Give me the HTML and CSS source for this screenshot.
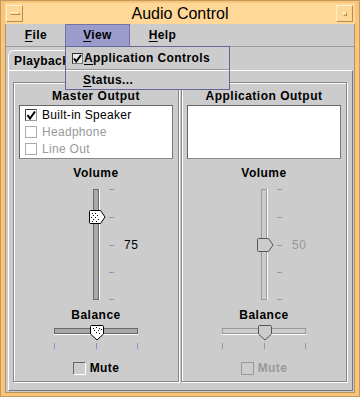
FILE: index.html
```html
<!DOCTYPE html>
<html>
<head>
  <title>Audio Control</title>
  <meta name="viewport" content="width=device-width, initial-scale=1">
  <link rel="stylesheet" href="styles.css">
</head>
<body>
  <div class="window">
    <div class="titlebar">
      <span class="wbtn"><span class="wbtn-min"></span></span>
      <span class="title">Audio Control</span>
      <span class="wbtn"><span class="wbtn-max"></span></span>
    </div>

    <div class="menubar">
      <span class="menu menu-first"><u>F</u>ile</span>
      <span class="menu open"><u>V</u>iew</span>
      <span class="menu"><u>H</u>elp</span>

      <div class="dropdown">
        <div class="ditem">
          <span class="cb cb-menu">
            <svg width="9" height="9" viewBox="0 0 9 9"><path d="M1 4.5 L3.2 7.5 L8 1" fill="none" stroke="#000" stroke-width="2"/></svg>
          </span>
          <span><u>A</u>pplication Controls</span>
        </div>
        <div class="dsep"></div>
        <div class="ditem ditem-plain"><span><u>S</u>tatus...</span></div>
      </div>
    </div>

    <div class="content">
      <div class="tabs"><span class="tab">Playback</span></div>
      <div class="tabpanel">

        <div class="group">
          <div class="gtitle">Master Output</div>
          <div class="list">
            <div class="litem">
              <span class="cb cb-on">
                <svg width="10" height="10" viewBox="0 0 10 10"><path d="M1.5 5 L4 8.5 L9 1.5" fill="none" stroke="#000" stroke-width="2"/></svg>
              </span>
              Built-in Speaker
            </div>
            <div class="litem off"><span class="cb cb-off"></span>Headphone</div>
            <div class="litem off"><span class="cb cb-off"></span>Line Out</div>
          </div>

          <div class="gtitle gap-vol">Volume</div>
          <div class="vslider">
            <span></span>
            <svg width="36" height="113" viewBox="0 0 36 113">
              <rect x="15.5" y="1.5" width="5" height="110" fill="#a9a9a9" stroke="#6b6b6b"/>
              <line x1="21.5" y1="1" x2="21.5" y2="112" stroke="#fff"/>
              <g stroke="#8f8fcc">
                <line x1="31" y1="1.5" x2="36" y2="1.5"/>
                <line x1="31" y1="29.5" x2="36" y2="29.5"/>
                <line x1="31" y1="57.5" x2="36" y2="57.5"/>
                <line x1="31" y1="84.5" x2="36" y2="84.5"/>
                <line x1="31" y1="111.5" x2="36" y2="111.5"/>
              </g>
              <path d="M12.5 22.5 H22.5 L27 29 L22.5 35.5 H12.5 Q11.5 35.5 11.5 34.5 V23.5 Q11.5 22.5 12.5 22.5 Z" fill="#fff" stroke="#000"/>
              <g fill="#000">
                <rect x="14" y="25" width="1" height="1"/><rect x="17" y="25" width="1" height="1"/>
                <rect x="15" y="27" width="1" height="1"/><rect x="19" y="27" width="1" height="1"/>
                <rect x="13" y="29" width="1" height="1"/><rect x="17" y="29" width="1" height="1"/>
                <rect x="15" y="31" width="1" height="1"/><rect x="20" y="31" width="1" height="1"/>
                <rect x="14" y="33" width="1" height="1"/><rect x="18" y="33" width="1" height="1"/>
              </g>
            </svg>
            <span class="vlabel">75</span>
          </div>

          <div class="gtitle gap-bal">Balance</div>
          <svg class="hslider" width="86" height="25" viewBox="0 0 86 25">
            <rect x="1.5" y="4.5" width="83" height="5" fill="#a9a9a9" stroke="#6b6b6b"/>
            <line x1="1" y1="10.5" x2="85" y2="10.5" stroke="#fff"/>
            <g stroke="#8f8fcc">
              <line x1="1.5" y1="19" x2="1.5" y2="25"/>
              <line x1="43.5" y1="19" x2="43.5" y2="25"/>
              <line x1="84.5" y1="19" x2="84.5" y2="25"/>
            </g>
            <path d="M38.5 1.5 H49.5 Q50.5 1.5 50.5 2.5 V10 L44 16 L37.5 10 V2.5 Q37.5 1.5 38.5 1.5 Z" fill="#fff" stroke="#000"/>
            <g fill="#000">
              <rect x="40" y="4" width="1" height="1"/><rect x="43" y="3" width="1" height="1"/><rect x="46" y="4" width="1" height="1"/>
              <rect x="41" y="6" width="1" height="1"/><rect x="45" y="6" width="1" height="1"/><rect x="48" y="5" width="1" height="1"/>
              <rect x="43" y="8" width="1" height="1"/><rect x="46" y="9" width="1" height="1"/>
            </g>
          </svg>

          <div class="mute"><span class="cb cb-mute"></span>Mute</div>
        </div>

        <div class="group">
          <div class="gtitle">Application Output</div>
          <div class="list"></div>

          <div class="gtitle gap-vol">Volume</div>
          <div class="vslider">
            <span></span>
            <svg width="36" height="113" viewBox="0 0 36 113">
              <rect x="15.5" y="1.5" width="5" height="110" fill="#cccccc" stroke="#999"/>
              <line x1="21.5" y1="1" x2="21.5" y2="112" stroke="#fff"/>
              <g stroke="#999">
                <line x1="31" y1="1.5" x2="36" y2="1.5"/>
                <line x1="31" y1="29.5" x2="36" y2="29.5"/>
                <line x1="31" y1="57.5" x2="36" y2="57.5"/>
                <line x1="31" y1="84.5" x2="36" y2="84.5"/>
                <line x1="31" y1="111.5" x2="36" y2="111.5"/>
              </g>
              <path d="M12.5 50.5 H22.5 L27 57 L22.5 63.5 H12.5 Q11.5 63.5 11.5 62.5 V51.5 Q11.5 50.5 12.5 50.5 Z" fill="#cccccc" stroke="#555"/>
            </svg>
            <span class="vlabel off">50</span>
          </div>

          <div class="gtitle gap-bal">Balance</div>
          <svg class="hslider" width="86" height="25" viewBox="0 0 86 25">
            <rect x="1.5" y="4.5" width="83" height="5" fill="#cccccc" stroke="#999"/>
            <line x1="1" y1="10.5" x2="85" y2="10.5" stroke="#fff"/>
            <g stroke="#999">
              <line x1="1.5" y1="19" x2="1.5" y2="25"/>
              <line x1="43.5" y1="19" x2="43.5" y2="25"/>
              <line x1="84.5" y1="19" x2="84.5" y2="25"/>
            </g>
            <path d="M38.5 1.5 H49.5 Q50.5 1.5 50.5 2.5 V10 L44 16 L37.5 10 V2.5 Q37.5 1.5 38.5 1.5 Z" fill="#cccccc" stroke="#555"/>
          </svg>

          <div class="mute off"><span class="cb cb-mute-off"></span>Mute</div>
        </div>

      </div>
    </div>
  </div>
</body>
</html>
```

FILE: styles.css
```css
body { margin: 0; padding: 0; font-family: "Liberation Sans", Arial, sans-serif; font-size: 12px; color: #000; }
.window { width: 360px; height: 397px; box-sizing: border-box; background-color: #cccccc; border-style: solid; border-width: 3px 5px 4px 5px; border-color: #f7c67c; box-shadow: inset 0 0 0 1px #b9925a; position: relative; display: flex; flex-direction: column; outline: 1px solid #c49a5c; outline-offset: -1px; }

.titlebar { height: 21px; display: flex; align-items: center; background-color: #ffd898; flex-shrink: 0; }
.title { flex: 1; text-align: center; font-size: 16px; line-height: 21px; }
.wbtn { width: 17px; height: 17px; box-sizing: border-box; border: 1px solid; border-color: #fff0cc #b58c52 #b58c52 #fff0cc; display: flex; align-items: center; justify-content: center; margin: 0 2px 0 1px; }
.wbtn-min { width: 10px; height: 3px; box-sizing: border-box; border: 1px solid; border-color: #fff0cc #b58c52 #b58c52 #fff0cc; }
.wbtn-max { width: 4px; height: 4px; box-sizing: border-box; border: 1px solid; border-color: #fff0cc #b58c52 #b58c52 #fff0cc; }

.menubar { height: 22px; display: flex; border-bottom: 1px solid #999; position: relative; flex-shrink: 0; }
.menu { width: 65px; box-sizing: border-box; text-align: center; line-height: 22px; font-weight: bold; letter-spacing: 0.4px; }
.menu-first { width: 60px; padding-left: 2px; }
.menu u, .ditem u { text-underline-offset: 2px; }
.menu.open { background-color: #9c9ccc; border: 1px solid #7373a8; border-bottom: none; line-height: 21px; }

.dropdown { position: absolute; left: 60px; top: 22px; width: 165px; box-sizing: border-box; border: 1px solid #66669a; background-color: #cccccc; z-index: 5; }
.ditem { height: 22px; display: flex; align-items: center; padding-left: 6px; font-weight: bold; letter-spacing: 0.4px; }
.ditem-plain { height: 17px; padding-left: 17px; padding-bottom: 1px; }
.dsep { border-top: 1px solid #999; border-bottom: 1px solid #fff; }

.content { flex: 1; padding: 3px 2px 2px 3px; display: flex; flex-direction: column; }
.tabs { height: 20px; display: flex; }
.tab { width: 72px; box-sizing: border-box; border: 1px solid #fff; border-right-color: #777; border-bottom: none; border-top-left-radius: 6px; padding-left: 5px; line-height: 21px; font-weight: bold; letter-spacing: 0.4px; }
.tabpanel { flex: 1; box-sizing: border-box; border: 1px solid; border-color: #fff #777 #777 #fff; padding: 11px 0 0 4px; display: grid; grid-template-columns: 166px 166px; column-gap: 2px; align-content: start; }

.group { height: 300px; box-sizing: border-box; border: 1px solid #888; box-shadow: inset 1px 1px 0 #fff, 1px 1px 0 #fff; display: flex; flex-direction: column; align-items: center; padding-top: 6px; }
.gtitle { font-weight: bold; line-height: 14px; letter-spacing: 0.5px; }
.gap-vol { margin-top: 7px; }
.gap-bal { margin-top: 7px; }

.list { align-self: stretch; margin: 2px 5px 0 5px; height: 54px; box-sizing: border-box; background-color: #fff; border: 1px solid; border-color: #666 #777 #888 #666; }
.litem { height: 17px; display: flex; align-items: center; padding-left: 5px; gap: 5px; letter-spacing: 0.3px; }
.off { color: #999; }

.cb { display: inline-flex; align-items: center; justify-content: center; box-sizing: border-box; flex-shrink: 0; border: 1px solid; }
.cb-on { width: 12px; height: 12px; border-color: #444 #999 #999 #444; background-color: #fff; }
.cb-off { width: 12px; height: 12px; border-color: #aaa; background-color: #fff; }
.cb-menu { width: 11px; height: 11px; border-color: #333 #777 #777 #333; background-color: #e8e8e8; margin-right: 1px; }
.cb-mute { width: 13px; height: 13px; border-color: #666 #fff #fff #666; background-color: #cccccc; }
.cb-mute-off { width: 13px; height: 13px; border-color: #999; background-color: #cccccc; }

.vslider { align-self: stretch; margin-top: 8px; display: grid; grid-template-columns: 1fr 36px 1fr; align-items: center; }
.vslider svg { display: block; }
.vlabel { padding-left: 10px; letter-spacing: 0.5px; }

.hslider { display: block; margin-top: 2px; }

.mute { margin-top: 12px; height: 14px; display: flex; align-items: center; gap: 4px; font-weight: bold; letter-spacing: 0.4px; }
```
